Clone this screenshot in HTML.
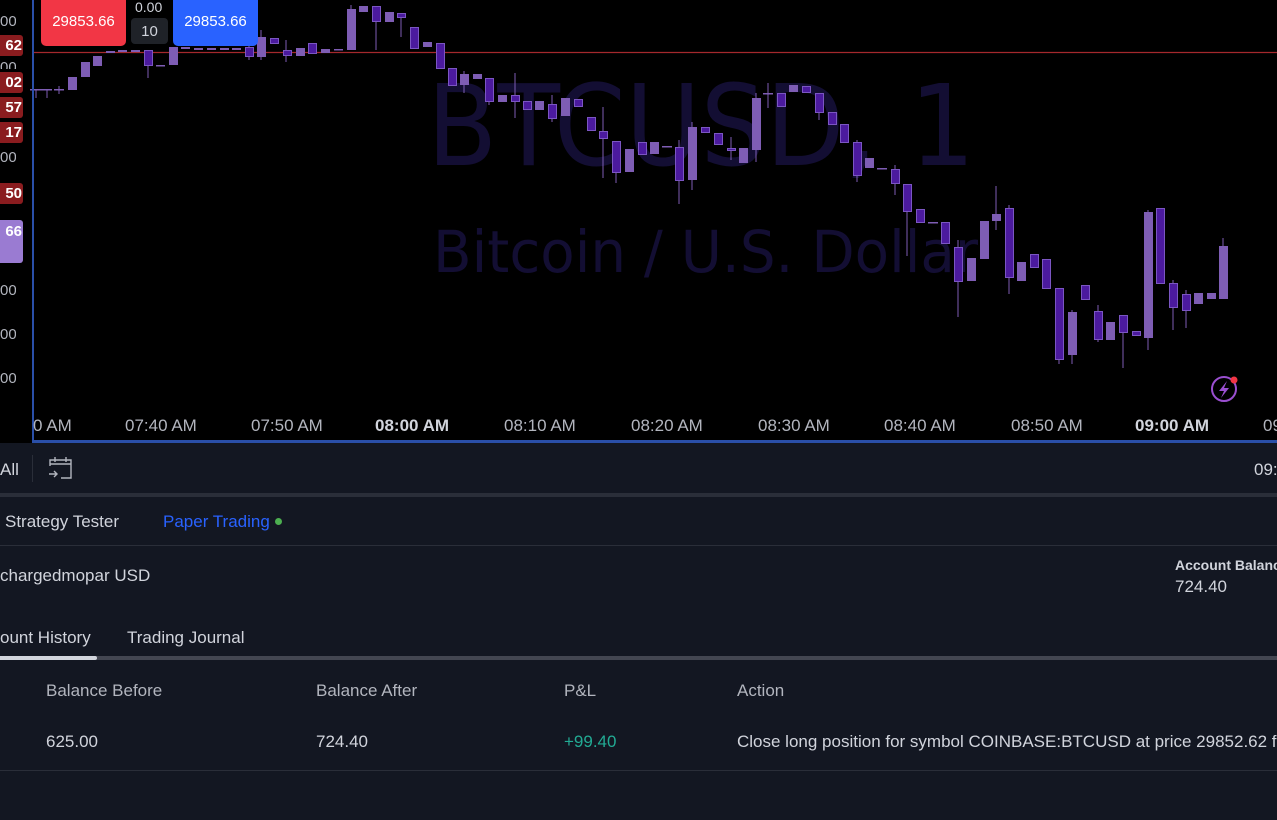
<!DOCTYPE html>
<html><head><meta charset="utf-8"><style>
*{margin:0;padding:0;box-sizing:border-box}
body{width:1277px;height:820px;overflow:hidden;background:#131722;font-family:"Liberation Sans","DejaVu Sans",sans-serif;position:relative;color:#d1d4dc}
.a{position:absolute;white-space:nowrap;font-size:17px}
#chart{position:absolute;left:0;top:0;width:1277px;height:443px;background:#000}
.lab{position:absolute;left:0;width:23px;height:21px;color:#fff;font-size:15px;font-weight:bold;line-height:21px;text-align:right;padding-right:1px;border-radius:0 3px 3px 0;overflow:hidden}
.red{background:#8a1c1f}
.gl{position:absolute;left:0;color:#b2b5be;font-size:15px;width:16px;text-align:right;overflow:hidden}
.t{position:absolute;top:416px;font-size:17px;color:#b2b5be}
.b{font-weight:bold;color:#d1d4dc}
</style></head><body>
<div id="chart">
<svg width="1277" height="443" style="position:absolute;left:0;top:0" font-family="DejaVu Sans, Liberation Sans, sans-serif">
<text x="427" y="165" font-size="112" fill="#130e33" textLength="548" lengthAdjust="spacingAndGlyphs">BTCUSD, 1</text>
<text x="433" y="272" font-size="58" fill="#130e33" textLength="545" lengthAdjust="spacingAndGlyphs">Bitcoin / U.S. Dollar</text>
<line x1="33" y1="52.5" x2="1277" y2="52.5" stroke="#a5282c" stroke-width="1.2"/>
<g stroke="#7e5db4" stroke-width="1">
<line x1="36" y1="89" x2="36" y2="98"/><line x1="47" y1="89" x2="47" y2="98"/><line x1="59" y1="86" x2="59" y2="94"/>
<line x1="148" y1="50" x2="148" y2="78"/><line x1="603" y1="107" x2="603" y2="178"/><line x1="679" y1="140" x2="679" y2="204"/>
<line x1="515" y1="73" x2="515" y2="118"/><line x1="464" y1="71" x2="464" y2="93"/><line x1="692" y1="122" x2="692" y2="190"/>
<line x1="756" y1="93" x2="756" y2="162"/><line x1="958" y1="240" x2="958" y2="317"/><line x1="996" y1="186" x2="996" y2="230"/>
<line x1="1059" y1="288" x2="1059" y2="364"/><line x1="1072" y1="310" x2="1072" y2="364"/><line x1="1123" y1="330" x2="1123" y2="368"/>
<line x1="1148" y1="210" x2="1148" y2="350"/><line x1="1223" y1="238" x2="1223" y2="299"/><line x1="1186" y1="290" x2="1186" y2="328"/>
<line x1="1173" y1="280" x2="1173" y2="330"/><line x1="1098" y1="305" x2="1098" y2="342"/><line x1="1009" y1="205" x2="1009" y2="294"/>
<line x1="907" y1="184" x2="907" y2="256"/><line x1="895" y1="165" x2="895" y2="195"/><line x1="857" y1="140" x2="857" y2="182"/>
<line x1="376" y1="6" x2="376" y2="50"/><line x1="401" y1="13" x2="401" y2="37"/><line x1="351" y1="5" x2="351" y2="50"/>
<line x1="819" y1="93" x2="819" y2="120"/><line x1="768" y1="83" x2="768" y2="108"/><line x1="731" y1="137" x2="731" y2="160"/>
<line x1="616" y1="141" x2="616" y2="183"/><line x1="552" y1="95" x2="552" y2="122"/><line x1="489" y1="78" x2="489" y2="105"/>
<line x1="286" y1="40" x2="286" y2="62"/><line x1="249" y1="38" x2="249" y2="60"/><line x1="261" y1="30" x2="261" y2="60"/>
</g>
<g fill="#7e5db4">
<rect x="30" y="89" width="12" height="1.5"/><rect x="42" y="89" width="10" height="1.5"/><rect x="54" y="89" width="10" height="1.5"/>
<rect x="68" y="77" width="9" height="13"/><rect x="81" y="62" width="9" height="15"/><rect x="93" y="56" width="9" height="10"/>
<rect x="106" y="51" width="9" height="2"/><rect x="118" y="50" width="9" height="2"/><rect x="131" y="50" width="9" height="2"/>
<rect x="156" y="65" width="9" height="1.5"/><rect x="169" y="47" width="9" height="18"/><rect x="181" y="47" width="9" height="2"/>
<rect x="194" y="48" width="9" height="2"/><rect x="207" y="48" width="9" height="2"/><rect x="220" y="48" width="9" height="2"/><rect x="232" y="48" width="9" height="2"/>
<rect x="257" y="37" width="9" height="20"/><rect x="296" y="48" width="9" height="8"/><rect x="321" y="49" width="9" height="4"/><rect x="334" y="49" width="9" height="1.5"/>
<rect x="347" y="9" width="9" height="41"/><rect x="359" y="6" width="9" height="6"/><rect x="385" y="12" width="9" height="10"/><rect x="423" y="42" width="9" height="5"/>
<rect x="460" y="74" width="9" height="11"/><rect x="473" y="74" width="9" height="5"/><rect x="498" y="95" width="9" height="7"/><rect x="535" y="101" width="9" height="9"/>
<rect x="561" y="98" width="9" height="18"/><rect x="625" y="149" width="9" height="23"/><rect x="650" y="142" width="9" height="12"/><rect x="662" y="146" width="10" height="1.5"/>
<rect x="688" y="127" width="9" height="53"/><rect x="739" y="148" width="9" height="15"/><rect x="752" y="98" width="9" height="52"/><rect x="763" y="93" width="10" height="1.5"/>
<rect x="789" y="85" width="9" height="7"/><rect x="865" y="158" width="9" height="10"/><rect x="877" y="168" width="10" height="1.5"/><rect x="928" y="222" width="10" height="1.5"/>
<rect x="967" y="258" width="9" height="23"/><rect x="980" y="221" width="9" height="38"/><rect x="992" y="214" width="9" height="7"/><rect x="1017" y="262" width="9" height="19"/>
<rect x="1068" y="312" width="9" height="43"/><rect x="1106" y="322" width="9" height="18"/><rect x="1144" y="212" width="9" height="126"/><rect x="1194" y="293" width="9" height="11"/>
<rect x="1207" y="293" width="9" height="6"/><rect x="1219" y="246" width="9" height="53"/>
</g>
<g fill="#4b1a9e" stroke="#7b56c2" stroke-width="1">
<rect x="144.5" y="50.5" width="8" height="15"/><rect x="245.5" y="47.5" width="8" height="9"/><rect x="270.5" y="38.5" width="8" height="5"/><rect x="283.5" y="50.5" width="8" height="5"/>
<rect x="308.5" y="43.5" width="8" height="10"/><rect x="372.5" y="6.5" width="8" height="15"/><rect x="397.5" y="13.5" width="8" height="4"/><rect x="410.5" y="27.5" width="8" height="21"/>
<rect x="436.5" y="43.5" width="8" height="25"/><rect x="448.5" y="68.5" width="8" height="17"/><rect x="485.5" y="78.5" width="8" height="23"/><rect x="511.5" y="95.5" width="8" height="6"/>
<rect x="523.5" y="101.5" width="8" height="8"/><rect x="548.5" y="104.5" width="8" height="14"/><rect x="574.5" y="99.5" width="8" height="7"/><rect x="587.5" y="117.5" width="8" height="13"/>
<rect x="599.5" y="131.5" width="8" height="7"/><rect x="612.5" y="141.5" width="8" height="31"/><rect x="638.5" y="142.5" width="8" height="12"/><rect x="675.5" y="147.5" width="8" height="33"/>
<rect x="701.5" y="127.5" width="8" height="5"/><rect x="714.5" y="133.5" width="8" height="11"/><rect x="727.5" y="148.5" width="8" height="2"/><rect x="777.5" y="93.5" width="8" height="13"/>
<rect x="802.5" y="86.5" width="8" height="6"/><rect x="815.5" y="93.5" width="8" height="19"/><rect x="828.5" y="112.5" width="8" height="12"/><rect x="840.5" y="124.5" width="8" height="18"/>
<rect x="853.5" y="142.5" width="8" height="33"/><rect x="891.5" y="169.5" width="8" height="14"/><rect x="903.5" y="184.5" width="8" height="27"/><rect x="916.5" y="209.5" width="8" height="13"/>
<rect x="941.5" y="222.5" width="8" height="21"/><rect x="954.5" y="247.5" width="8" height="34"/><rect x="1005.5" y="208.5" width="8" height="69"/><rect x="1030.5" y="254.5" width="8" height="13"/>
<rect x="1042.5" y="259.5" width="8" height="29"/><rect x="1055.5" y="288.5" width="8" height="71"/><rect x="1081.5" y="285.5" width="8" height="14"/><rect x="1094.5" y="311.5" width="8" height="28"/>
<rect x="1119.5" y="315.5" width="8" height="17"/><rect x="1132.5" y="331.5" width="8" height="4"/><rect x="1156.5" y="208.5" width="8" height="75"/><rect x="1169.5" y="283.5" width="8" height="24"/>
<rect x="1182.5" y="294.5" width="8" height="16"/>
</g>
<circle cx="1224" cy="389" r="12" fill="none" stroke="#9a4fd0" stroke-width="2"/>
<path d="M1227 381 L1219 391 L1224 391 L1221 398 L1229 388 L1224 388 Z" fill="#9a4fd0"/>
<circle cx="1234" cy="380" r="3.5" fill="#f23645"/>
</svg>
<div style="position:absolute;left:32px;top:0;width:2px;height:443px;background:#2a4fa8"></div>
<div style="position:absolute;left:32px;top:440px;width:1245px;height:3px;background:#2a4fa8"></div>
<div class="gl" style="top:13px">00</div>
<div class="lab red" style="top:35px">62</div>
<div class="gl" style="top:59px;height:10px">00</div>
<div class="lab red" style="top:72px">02</div>
<div class="lab red" style="top:97px">57</div>
<div class="lab red" style="top:122px">17</div>
<div class="gl" style="top:149px">00</div>
<div class="lab red" style="top:183px">50</div>
<div class="lab" style="top:220px;height:43px;line-height:24px;background:#9a7bd2">66</div>
<div class="gl" style="top:282px">00</div>
<div class="gl" style="top:326px">00</div>
<div class="gl" style="top:370px">00</div>
<div class="a" style="left:41px;top:0;width:85px;height:46px;background:#f23645;border-radius:0 0 5px 5px;color:#fff;font-size:15px;text-align:center;line-height:44px">29853.66</div>
<div class="a" style="left:135px;top:-1px;font-size:14px;color:#d1d4dc">0.00</div>
<div class="a" style="left:131px;top:18px;width:37px;height:26px;background:#1f2228;border-radius:4px;color:#d1d4dc;font-size:15px;text-align:center;line-height:27px">10</div>
<div class="a" style="left:173px;top:0;width:85px;height:46px;background:#2962ff;border-radius:0 0 5px 5px;color:#fff;font-size:15px;text-align:center;line-height:44px">29853.66</div>
<div class="t" style="left:33px">0 AM</div>
<div class="t" style="left:125px">07:40 AM</div>
<div class="t" style="left:251px">07:50 AM</div>
<div class="t b" style="left:375px">08:00 AM</div>
<div class="t" style="left:504px">08:10 AM</div>
<div class="t" style="left:631px">08:20 AM</div>
<div class="t" style="left:758px">08:30 AM</div>
<div class="t" style="left:884px">08:40 AM</div>
<div class="t" style="left:1011px">08:50 AM</div>
<div class="t b" style="left:1135px">09:00 AM</div>
<div class="t" style="left:1263px">09</div>
</div>
<div class="a" style="left:0;top:460px;color:#d1d4dc">All</div>
<div class="a" style="left:32px;top:455px;width:1px;height:27px;background:#2a2e39"></div>
<svg class="a" style="left:47px;top:455px" width="27" height="26" viewBox="0 0 27 26" fill="none" stroke="#b2b5be" stroke-width="1.4">
<path d="M3 11 V5 H24 V23 H14"/><path d="M3 9 H24"/><path d="M8 2 V7 M19 2 V7"/><path d="M2 19 H10 M7 16 L10 19 L7 22"/></svg>
<div class="a" style="left:1254px;top:460px;color:#d1d4dc">09:</div>
<div class="a" style="left:0;top:493px;width:1277px;height:4px;background:#2a2e39"></div>
<div class="a" style="left:5px;top:512px;color:#d1d4dc">Strategy Tester</div>
<div class="a" style="left:163px;top:512px;color:#2962ff">Paper Trading</div>
<div class="a" style="left:275px;top:518px;width:7px;height:7px;border-radius:50%;background:#4caf50"></div>
<div class="a" style="left:0;top:545px;width:1277px;height:1px;background:#2a2e39"></div>
<div class="a" style="left:0;top:566px;color:#d1d4dc">chargedmopar USD</div>
<div class="a" style="left:1175px;top:557px;font-size:14px;font-weight:bold;color:#d1d4dc">Account Balance</div>
<div class="a" style="left:1175px;top:577px;color:#d1d4dc">724.40</div>
<div class="a" style="left:0;top:628px;color:#d1d4dc">ount History</div>
<div class="a" style="left:127px;top:628px;color:#d1d4dc">Trading Journal</div>
<div class="a" style="left:0;top:656px;width:1277px;height:4px;background:#434651"></div>
<div class="a" style="left:0;top:656px;width:97px;height:4px;background:#d1d4dc;border-radius:0 2px 2px 0"></div>
<div class="a" style="left:46px;top:681px;color:#b2b5be">Balance Before</div>
<div class="a" style="left:316px;top:681px;color:#b2b5be">Balance After</div>
<div class="a" style="left:564px;top:681px;color:#b2b5be">P&amp;L</div>
<div class="a" style="left:737px;top:681px;color:#b2b5be">Action</div>
<div class="a" style="left:46px;top:732px;color:#d1d4dc">625.00</div>
<div class="a" style="left:316px;top:732px;color:#d1d4dc">724.40</div>
<div class="a" style="left:564px;top:732px;color:#22ab94">+99.40</div>
<div class="a" style="left:737px;top:732px;color:#d1d4dc">Close long position for symbol COINBASE:BTCUSD at price 29852.62 for</div>
<div class="a" style="left:0;top:770px;width:1277px;height:1px;background:#2a2e39"></div>
</body></html>
